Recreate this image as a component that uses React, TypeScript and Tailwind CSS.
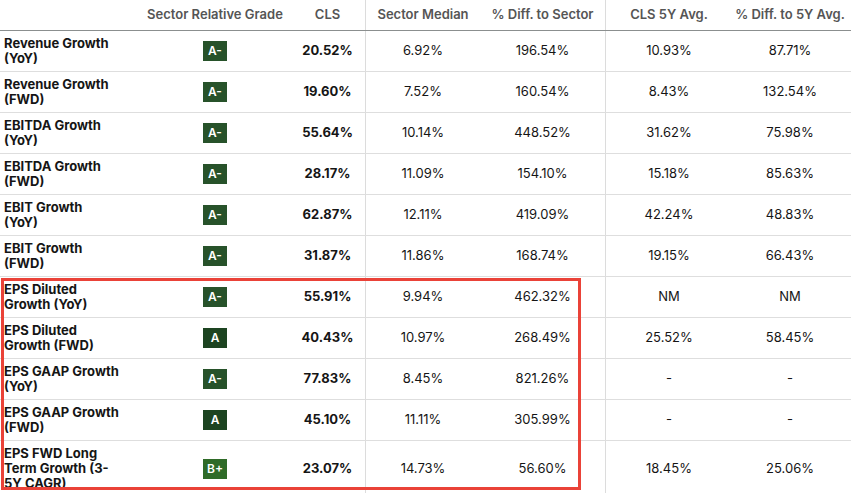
const rows = [
  { name: ['Revenue Growth', '(YoY)'], grade: 'A-', cls: '20.52%', median: '6.92%', diff: '196.54%', avg: '10.93%', diffAvg: '87.71%' },
  { name: ['Revenue Growth', '(FWD)'], grade: 'A-', cls: '19.60%', median: '7.52%', diff: '160.54%', avg: '8.43%', diffAvg: '132.54%' },
  { name: ['EBITDA Growth', '(YoY)'], grade: 'A-', cls: '55.64%', median: '10.14%', diff: '448.52%', avg: '31.62%', diffAvg: '75.98%' },
  { name: ['EBITDA Growth', '(FWD)'], grade: 'A-', cls: '28.17%', median: '11.09%', diff: '154.10%', avg: '15.18%', diffAvg: '85.63%' },
  { name: ['EBIT Growth', '(YoY)'], grade: 'A-', cls: '62.87%', median: '12.11%', diff: '419.09%', avg: '42.24%', diffAvg: '48.83%' },
  { name: ['EBIT Growth', '(FWD)'], grade: 'A-', cls: '31.87%', median: '11.86%', diff: '168.74%', avg: '19.15%', diffAvg: '66.43%' },
  { name: ['EPS Diluted', 'Growth (YoY)'], grade: 'A-', cls: '55.91%', median: '9.94%', diff: '462.32%', avg: 'NM', diffAvg: 'NM' },
  { name: ['EPS Diluted', 'Growth (FWD)'], grade: 'A', cls: '40.43%', median: '10.97%', diff: '268.49%', avg: '25.52%', diffAvg: '58.45%' },
  { name: ['EPS GAAP Growth', '(YoY)'], grade: 'A-', cls: '77.83%', median: '8.45%', diff: '821.26%', avg: '-', diffAvg: '-' },
  { name: ['EPS GAAP Growth', '(FWD)'], grade: 'A', cls: '45.10%', median: '11.11%', diff: '305.99%', avg: '-', diffAvg: '-' },
  { name: ['EPS FWD Long', 'Term Growth (3-', '5Y CAGR)'], grade: 'B+', cls: '23.07%', median: '14.73%', diff: '56.60%', avg: '18.45%', diffAvg: '25.06%' },
];

const gradeColor: Record<string, string> = {
  'A-': 'bg-[#27522a]',
  A: 'bg-[#1d4421]',
  'B+': 'bg-[#2f6b28]',
};

const cols = 'grid grid-cols-[140px_150px_76px_114px_126px_126px_116px]';

function Grade({ value }: { value: string }) {
  return (
    <span className={`flex h-[20px] w-[24px] items-center justify-center text-[12px] font-semibold text-white ${gradeColor[value]}`}>
      {value}
    </span>
  );
}

export default function App() {
  return (
    <div
      className="relative min-h-screen w-[851px] overflow-hidden bg-white text-[13px] text-[#151515]"
      style={{ fontFamily: 'Inter, "Noto Sans", sans-serif' }}
    >
      <div className={`${cols} h-[31px] items-center border-b border-[#8b8f8f] font-semibold text-[#555]`}>
        <div />
        <div className="text-center">Sector Relative Grade</div>
        <div className="flex h-full items-center justify-center border-r border-[#dcdcdc]">CLS</div>
        <div className="text-center">Sector Median</div>
        <div className="flex h-full items-center justify-center border-r border-[#dcdcdc]">% Diff. to Sector</div>
        <div className="text-center">CLS 5Y Avg.</div>
        <div className="text-center">% Diff. to 5Y Avg.</div>
      </div>
      {rows.map((row) => (
        <div key={row.name.join(' ')} className={`${cols} min-h-[41px] border-b border-[#dedede]`}>
          <div className="flex flex-col justify-center py-[5px] pl-[4px] font-bold leading-[15px]">
            {row.name.map((line) => (
              <span key={line} className="whitespace-nowrap">{line}</span>
            ))}
          </div>
          <div className="flex items-center justify-center">
            <Grade value={row.grade} />
          </div>
          <div className="flex items-center justify-center border-r border-[#dcdcdc] font-bold">{row.cls}</div>
          <div className="flex items-center justify-center">{row.median}</div>
          <div className="flex items-center justify-center border-r border-[#dcdcdc]">{row.diff}</div>
          <div className="flex items-center justify-center">{row.avg}</div>
          <div className="flex items-center justify-center">{row.diffAvg}</div>
        </div>
      ))}
      <div className="pointer-events-none absolute left-[1px] top-[278px] h-[212px] w-[580px] border-[3px] border-[#ea4238]" />
    </div>
  );
}
